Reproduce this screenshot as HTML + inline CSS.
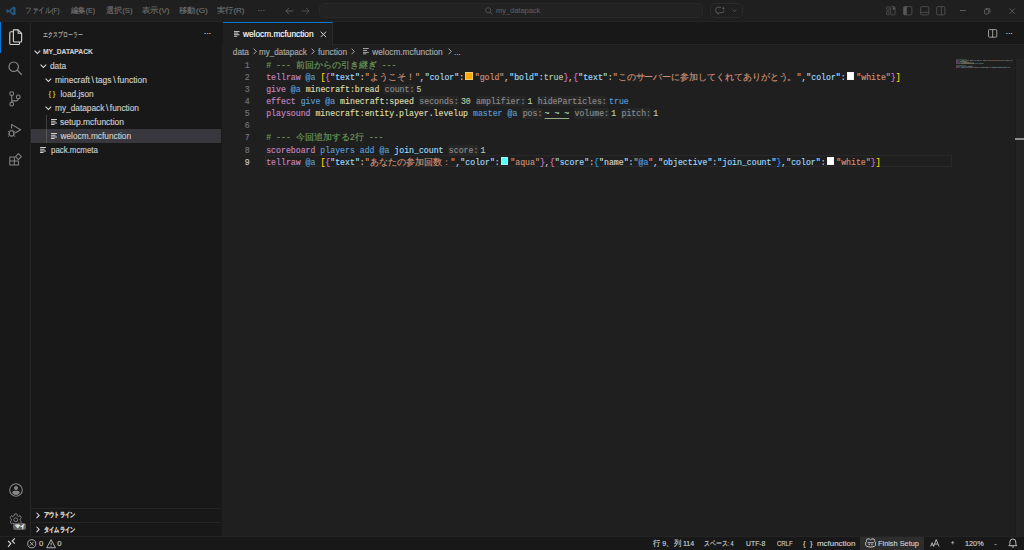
<!DOCTYPE html>
<html><head><meta charset="utf-8">
<style>
*{box-sizing:border-box;margin:0;padding:0}
html,body{width:1024px;height:550px;overflow:hidden;background:#181818}
body{position:relative;font-family:"Liberation Sans",sans-serif;color:#cccccc;-webkit-text-stroke:0.15px currentColor}
.abs{position:absolute}
.t{position:absolute;white-space:pre;line-height:1}
svg{position:absolute;overflow:visible}
/* title bar */
#title{left:0;top:0;width:1024px;height:22.4px;background:#1f1f1f;border-bottom:1px solid #242424}
.menu{font-size:7.7px;color:#6f6f6f;top:7.3px}
/* activity */
#act{left:0;top:22.4px;width:31px;height:513.5px;background:#181818;border-right:1px solid #262626}
/* sidebar */
#side{left:30.72px;top:22.4px;width:192.4px;height:513.5px;background:#181818;border-right:1px solid #262626}
.row{font-size:8.3px;color:#cccccc}
/* editor */
#ed{left:222px;top:22.4px;width:802px;height:513.5px;background:#1f1f1f}
#tabs{left:222px;top:22.4px;width:802px;height:22.4px;background:#181818;border-bottom:1px solid #262626}
#tab{left:222.6px;top:22.4px;width:110px;height:22.6px;background:#1f1f1f;border-top:1px solid #0078d4;border-right:1px solid #2b2b2b}
.code{font-family:"Liberation Mono",monospace;font-size:8.213px;line-height:12.16px;height:12.16px;white-space:pre;position:absolute;left:266.2px;color:#d4d4d4;margin-top:1.5px}
.ln{font-family:"Liberation Mono",monospace;font-size:8.213px;line-height:12.16px;position:absolute;width:20px;left:229.8px;margin-top:1.5px;text-align:right;color:#6e7681}
.hint{display:inline-block;height:10.3px;padding-top:0.8px;line-height:9.5px;vertical-align:baseline;background:#262626;color:#8b8b8b;border-radius:1.5px;margin-right:2px;padding-left:0.4px}
.cj{display:inline-flex;overflow:hidden;vertical-align:top;white-space:nowrap}.cj i{font-style:normal;flex:1 1 0;text-align:center;min-width:0}
.sw{display:inline-block;width:7.6px;height:7.9px;margin:0.15px 1.9px 0 1.1px;vertical-align:top;border:0.64px solid rgba(230,230,230,0.5)}
.k{color:#c586c0}.b{color:#569cd6}.id{color:#dcdcaa}.s{color:#ce9178}.c{color:#6a9955}.n{color:#b5cea8}.j{color:#9cdcfe}.p{color:#cccccc}
.y{color:#ffd700}.o{color:#da70d6}.bl{color:#179fff}.w{color:#d4d4d4}
/* status */
#status{left:0;top:535.9px;width:1024px;height:14.1px;background:#181818;border-top:1px solid #242424}
.st{font-size:7.7px;color:#cccccc;top:540px}
</style></head><body>

<!-- TITLE BAR -->
<div id="title" class="abs"></div>
<svg style="left:6px;top:6px" width="10" height="10" viewBox="0 0 24 24"><path d="M17.5 1 L23 3.5 V20.5 L17.5 23 L7 13.5 L2.5 17 L1 16 V8 L2.5 7 L7 10.5 Z M17.5 6.5 L11 12 L17.5 17.5 Z" fill="#235a80" fill-rule="evenodd"/></svg>
<div class="t menu" style="left:25.43px;transform:scaleX(0.828);transform-origin:0 0">ファイル(F)</div>
<div class="t menu" style="left:70.62px;transform:scaleX(0.919);transform-origin:0 0">編集(E)</div>
<div class="t menu" style="left:106.21px">選択(S)</div>
<div class="t menu" style="left:142.41px;transform:scaleX(1.050);transform-origin:0 0">表示(V)</div>
<div class="t menu" style="left:178.91px;transform:scaleX(1.060);transform-origin:0 0">移動(G)</div>
<div class="t menu" style="left:216.97px;transform:scaleX(1.030);transform-origin:0 0">実行(R)</div>
<div class="t menu" style="left:257.5px;top:7px">···</div>

<div class="abs" style="left:318.7px;top:2.9px;width:384.6px;height:15.6px;border-radius:5px;background:#222222;border:1px solid #282828"></div>
<svg style="left:484.6px;top:7px" width="7.8" height="8" viewBox="0 0 16 16"><circle cx="6.5" cy="6.5" r="5.2" fill="none" stroke="#5c5c5c" stroke-width="1.6"/><path d="M10.3 10.3 L15 15" stroke="#5c5c5c" stroke-width="1.8"/></svg>
<div class="t menu" style="left:496.02px;color:#5a5a5a;transform:scaleX(0.967);transform-origin:0 0">my_datapack</div>
<svg style="left:284.5px;top:7px" width="9" height="8" viewBox="0 0 16 14"><path d="M15 7 H2 M7 1.5 L1.5 7 L7 12.5" fill="none" stroke="#6a6a6a" stroke-width="1.4"/></svg>
<svg style="left:301px;top:7px" width="9" height="8" viewBox="0 0 16 14"><path d="M1 7 H14 M9 1.5 L14.5 7 L9 12.5" fill="none" stroke="#5a5a5a" stroke-width="1.4"/></svg>
<div class="abs" style="left:710.4px;top:2.9px;width:32.4px;height:15.6px;border-radius:5px;background:#1f1f1f;border:1px solid #2b2b2b"></div>
<svg style="left:715px;top:6.2px" width="10.5" height="9.2" viewBox="0 0 16 14"><path d="M9.5 2 H4 Q1.2 2 1.2 4.6 V7.6 Q1.2 10 3.6 10 H4.4 V12.6 L7.4 10 H11.2 Q13.6 10 13.6 7.6 V6.8" fill="none" stroke="#626262" stroke-width="1.3" stroke-linejoin="round"/><path d="M13 0.6 L13.7 2.6 L15.5 3.3 L13.7 4 L13 6 L12.3 4 L10.5 3.3 L12.3 2.6 Z" fill="#626262"/></svg>
<svg style="left:732.2px;top:9.1px" width="5" height="3.2" viewBox="0 0 10 6"><path d="M1 1 L5 5 L9 1" fill="none" stroke="#626262" stroke-width="1.4"/></svg>
<!-- layout icons -->
<svg style="left:886px;top:6.3px" width="10" height="9.5" viewBox="0 0 16 15"><rect x="1" y="1" width="4" height="5.5" rx="0.8" fill="none" stroke="#585858" stroke-width="1.2"/><rect x="1" y="8.5" width="4" height="5.5" rx="0.8" fill="none" stroke="#585858" stroke-width="1.2"/><rect x="7.5" y="1" width="7" height="13" rx="1" fill="none" stroke="#585858" stroke-width="1.2"/><circle cx="12.5" cy="4" r="2" fill="#585858"/></svg>
<svg style="left:903px;top:6.3px" width="9.5" height="9.5" viewBox="0 0 15 15"><rect x="1" y="1" width="13" height="13" rx="1.5" fill="none" stroke="#585858" stroke-width="1.2"/><rect x="1" y="1" width="5" height="13" fill="#585858"/></svg>
<svg style="left:919.5px;top:6.3px" width="9.5" height="9.5" viewBox="0 0 15 15"><rect x="1" y="1" width="13" height="13" rx="1.5" fill="none" stroke="#585858" stroke-width="1.2"/><path d="M1 10 H14" stroke="#585858" stroke-width="1.2"/></svg>
<svg style="left:936px;top:6.3px" width="9.5" height="9.5" viewBox="0 0 15 15"><rect x="1" y="1" width="13" height="13" rx="1.5" fill="none" stroke="#585858" stroke-width="1.2"/><path d="M8.5 1 V14" stroke="#585858" stroke-width="1.2"/></svg>
<svg style="left:959.6px;top:10px" width="5.8" height="1" viewBox="0 0 13 2"><path d="M0 1 H13" stroke="#7a7a7a" stroke-width="1.6"/></svg>
<svg style="left:983.8px;top:7.8px" width="6.4" height="6.4" viewBox="0 0 14 14"><rect x="1" y="3.5" width="9.5" height="9.5" rx="2.5" fill="none" stroke="#7a7a7a" stroke-width="1.5"/><path d="M3.5 1 H10.5 Q13 1 13 3.5 V10.5" fill="none" stroke="#7a7a7a" stroke-width="1.5"/></svg>
<svg style="left:1008.7px;top:7.7px" width="6.3" height="6.3" viewBox="0 0 14 14"><path d="M1 1 L13 13 M13 1 L1 13" stroke="#7a7a7a" stroke-width="1.4"/></svg>

<!-- ACTIVITY BAR -->
<div id="act" class="abs"></div>
<div class="abs" style="left:0;top:22.4px;width:1.3px;height:30.7px;background:#0078d4"></div>
<svg style="left:8.6px;top:28.8px" width="13.4" height="16.4" viewBox="0 0 14 17"><path d="M4.6 0.8 H9.6 L13.2 4.4 V12.6 Q13.2 13.6 12.2 13.6 H5.6 Q4.6 13.6 4.6 12.6 Z" fill="none" stroke="#d7d7d7" stroke-width="1.15" stroke-linejoin="round"/><path d="M9.6 0.8 V4.4 H13.2" fill="none" stroke="#d7d7d7" stroke-width="1.1"/><path d="M4.6 2.8 H2 Q0.8 2.8 0.8 4 V15 Q0.8 16.2 2 16.2 H9.8 Q11 16.2 11 15 V13.6" fill="none" stroke="#d7d7d7" stroke-width="1.15"/></svg>
<svg style="left:8.2px;top:60.8px" width="14.5" height="14.5" viewBox="0 0 16 16"><circle cx="6.3" cy="6.3" r="5.2" fill="none" stroke="#868686" stroke-width="1.3"/><path d="M10 10 L15.2 15.2" stroke="#868686" stroke-width="1.4"/></svg>
<svg style="left:9px;top:90.8px" width="12" height="15.8" viewBox="0 0 12 16"><circle cx="2.7" cy="2.7" r="1.9" fill="none" stroke="#868686" stroke-width="1.1"/><circle cx="2.7" cy="13.3" r="1.9" fill="none" stroke="#868686" stroke-width="1.1"/><circle cx="9.3" cy="6" r="1.9" fill="none" stroke="#868686" stroke-width="1.1"/><path d="M2.7 4.6 V11.4 M9.3 7.9 Q9.3 10 7 10 H2.7" fill="none" stroke="#868686" stroke-width="1.1"/></svg>
<svg style="left:7.3px;top:122.8px" width="14.5" height="14.5" viewBox="0 0 16 16"><path d="M5 1.5 L15 7.5 L9 11" fill="none" stroke="#868686" stroke-width="1.2"/><path d="M5 1.5 V6" stroke="#868686" stroke-width="1.2"/><ellipse cx="5" cy="11.5" rx="2.6" ry="3" fill="none" stroke="#868686" stroke-width="1.2"/><path d="M1 9 L2.5 10 M1 12 H2.4 M1 15 L2.6 13.8 M9 9 L7.5 10 M9 12 H7.6 M9 15 L7.4 13.8 M3.5 8.5 L4 7.5 M6.5 8.5 L6 7.5" stroke="#868686" stroke-width="1"/></svg>
<svg style="left:8.8px;top:153.2px" width="13" height="12.6" viewBox="0 0 16 15.5"><path d="M1 4.8 H6.6 V9.8 H1 Z M1 9.8 H6.6 V14.8 H1 Z M6.6 9.8 H11.8 V14.8 H6.6 Z" fill="none" stroke="#868686" stroke-width="1.25" stroke-linejoin="round"/><path d="M11.6 0.9 L15.2 4.5 L11.6 8.1 L8 4.5 Z" fill="none" stroke="#868686" stroke-width="1.25" stroke-linejoin="round"/></svg>
<svg style="left:8.5px;top:482.5px" width="14" height="14" viewBox="0 0 16 16"><circle cx="8" cy="8" r="7.2" fill="none" stroke="#868686" stroke-width="1.2"/><circle cx="8" cy="5.8" r="2.3" fill="#868686"/><path d="M3.6 11 Q4 8.8 6 8.8 H10 Q12 8.8 12.4 11 Q11 13.8 8 13.8 Q5 13.8 3.6 11 Z" fill="#868686"/></svg>
<svg style="left:8.5px;top:513px" width="13.5" height="12" viewBox="0 0 16 14"><path d="M6.6 1 H9.4 L9.8 3 L11.4 3.9 L13.3 3.2 L14.7 5.6 L13.2 7 L13.2 8.8 L14.7 10.2 L13.3 12.6 L11.4 11.9 L9.8 12.8 L9.4 14.8 H6.6 L6.2 12.8 L4.6 11.9 L2.7 12.6 L1.3 10.2 L2.8 8.8 V7 L1.3 5.6 L2.7 3.2 L4.6 3.9 L6.2 3 Z" fill="none" stroke="#868686" stroke-width="1.1"/><circle cx="8" cy="7.9" r="2.3" fill="none" stroke="#868686" stroke-width="1.1"/></svg>
<div class="abs" style="left:13.2px;top:522.6px;width:12.8px;height:7px;border-radius:2.5px;background:#616161"></div>
<div class="t" style="left:15px;top:523.5px;font-size:5.4px;font-weight:bold;color:#f0f0f0">マイ</div>

<!-- SIDEBAR -->
<div id="side" class="abs"></div>
<div class="t" style="left:43.49px;top:30.5px;font-size:7px;color:#bbbbbb;transform:scaleX(0.705);transform-origin:0 0">エクスプローラー</div>
<div class="t" style="left:203.8px;top:30px;font-size:8px;color:#cccccc;letter-spacing:-0.3px">···</div>
<svg style="left:33.8px;top:49.6px" width="6.8" height="4.2" viewBox="0 0 10 6"><path d="M0.8 0.8 L5 5 L9.2 0.8" fill="none" stroke="#d4d4d4" stroke-width="1.5"/></svg>
<div class="t" style="left:43.46px;top:48.4px;font-size:7.04px;font-weight:bold;color:#cccccc;transform:scaleX(0.952);transform-origin:0 0">MY_DATAPACK</div>
<svg style="left:39.8px;top:63.6px" width="6.8" height="4.2" viewBox="0 0 10 6"><path d="M0.8 0.8 L5 5 L9.2 0.8" fill="none" stroke="#d4d4d4" stroke-width="1.5"/></svg>
<div class="t row" style="left:50px;top:61.7px">data</div>
<svg style="left:45px;top:77.8px" width="6.8" height="4.2" viewBox="0 0 10 6"><path d="M0.8 0.8 L5 5 L9.2 0.8" fill="none" stroke="#d4d4d4" stroke-width="1.5"/></svg>
<div class="t row" style="left:55.00px;top:75.8px;transform:scaleX(1.022);transform-origin:0 0">minecraft<span style="margin:0 1.6px">\</span>tags<span style="margin:0 1.6px">\</span>function</div>
<div class="t" style="left:48.6px;top:90.3px;font-size:7.8px;color:#cbcb41;letter-spacing:1.6px">{}</div>
<div class="t row" style="left:60.5px;top:90px">load.json</div>
<svg style="left:45px;top:106px" width="6.8" height="4.2" viewBox="0 0 10 6"><path d="M0.8 0.8 L5 5 L9.2 0.8" fill="none" stroke="#d4d4d4" stroke-width="1.5"/></svg>
<div class="t row" style="left:55px;top:104px">my_datapack<span style="margin:0 1.6px">\</span>function</div>
<div class="abs" style="left:46px;top:115.2px;width:0.64px;height:28.2px;background:#404040"></div>
<svg style="left:51px;top:119.2px" width="6" height="6.4" viewBox="0 0 6 6.5"><path d="M0 0.6 H6 M0 2.3 H4.6 M0 4.0 H6 M0 5.7 H3.6" stroke="#cccccc" stroke-width="1.05"/></svg>
<div class="t row" style="left:59.99px;top:118.2px;transform:scaleX(1.020);transform-origin:0 0">setup.mcfunction</div>
<div class="abs" style="left:30.72px;top:129.28px;width:190.6px;height:14.08px;background:#37373d"></div>
<div class="abs" style="left:46px;top:129.28px;width:0.64px;height:14.08px;background:#585858"></div>
<svg style="left:51px;top:133.3px" width="6" height="6.4" viewBox="0 0 6 6.5"><path d="M0 0.6 H6 M0 2.3 H4.6 M0 4.0 H6 M0 5.7 H3.6" stroke="#cccccc" stroke-width="1.05"/></svg>
<div class="t row" style="left:60.5px;top:132.3px">welocm.mcfunction</div>
<svg style="left:40px;top:147.4px" width="6" height="6.4" viewBox="0 0 6 6.5"><path d="M0 0.6 H6 M0 2.3 H4.6 M0 4.0 H6 M0 5.7 H3.6" stroke="#cccccc" stroke-width="1.05"/></svg>
<div class="t row" style="left:50.50px;top:146.4px;transform:scaleX(0.950);transform-origin:0 0">pack.mcmeta</div>
<!-- bottom panels -->
<div class="abs" style="left:30.72px;top:507.8px;width:190.6px;height:0.8px;background:#242424"></div>
<div class="abs" style="left:30.72px;top:522.2px;width:190.6px;height:0.8px;background:#242424"></div>
<svg style="left:36px;top:511.6px" width="3.8" height="6.8" viewBox="0 0 6 10"><path d="M0.8 0.8 L5 5 L0.8 9.2" fill="none" stroke="#e0e0e0" stroke-width="1.6"/></svg>
<div class="t" style="left:44.00px;top:511.4px;font-size:7px;font-weight:bold;color:#cccccc;transform:scaleX(0.743);transform-origin:0 0">アウトライン</div>
<svg style="left:36px;top:525.7px" width="3.8" height="6.8" viewBox="0 0 6 10"><path d="M0.8 0.8 L5 5 L0.8 9.2" fill="none" stroke="#e0e0e0" stroke-width="1.6"/></svg>
<div class="t" style="left:44.00px;top:525.5px;font-size:7px;font-weight:bold;color:#cccccc;transform:scaleX(0.743);transform-origin:0 0">タイムライン</div>

<!-- EDITOR -->
<div id="ed" class="abs"></div>
<div id="tabs" class="abs"></div>
<div id="tab" class="abs"></div>
<svg style="left:233.5px;top:31px" width="5.5" height="6" viewBox="0 0 6 6.5"><path d="M0 0.6 H6 M0 2.3 H4.6 M0 4.0 H6 M0 5.7 H3.6" stroke="#cccccc" stroke-width="1.05"/></svg>
<div class="t" style="left:243px;top:30.1px;font-size:8.3px;color:#ffffff">welocm.mcfunction</div>
<svg style="left:320px;top:30.5px" width="6.8" height="6.8" viewBox="0 0 10 10"><path d="M1 1 L9 9 M9 1 L1 9" stroke="#d8d8d8" stroke-width="1.45"/></svg>
<svg style="left:988px;top:29.3px" width="9.3" height="8.8" viewBox="0 0 14 13"><rect x="0.8" y="0.8" width="12.4" height="11.4" rx="1.3" fill="none" stroke="#cccccc" stroke-width="1.1"/><path d="M7 0.8 V12.2" stroke="#cccccc" stroke-width="1.1"/></svg>
<div class="t" style="left:1005.6px;top:30px;font-size:8px;color:#cccccc;letter-spacing:-0.3px">···</div>
<div class="t" style="left:232.8px;top:48px;font-size:8.3px;color:#a9a9a9">data</div>
<svg style="left:253.4px;top:48.4px" width="4" height="6.8" viewBox="0 0 6 10"><path d="M0.8 0.8 L5 5 L0.8 9.2" fill="none" stroke="#b0b0b0" stroke-width="1.45"/></svg>
<div class="t" style="left:259.46px;top:48px;font-size:8.3px;color:#a9a9a9;transform:scaleX(0.969);transform-origin:0 0">my_datapack</div>
<svg style="left:311.1px;top:48.4px" width="4" height="6.8" viewBox="0 0 6 10"><path d="M0.8 0.8 L5 5 L0.8 9.2" fill="none" stroke="#b0b0b0" stroke-width="1.45"/></svg>
<div class="t" style="left:318px;top:48px;font-size:8.3px;color:#a9a9a9">function</div>
<svg style="left:350.8px;top:48.4px" width="4" height="6.8" viewBox="0 0 6 10"><path d="M0.8 0.8 L5 5 L0.8 9.2" fill="none" stroke="#b0b0b0" stroke-width="1.45"/></svg>
<svg style="left:362.8px;top:48.2px" width="5.8" height="6.4" viewBox="0 0 6 6.5"><path d="M0 0.5 H6 M0 2.5 H4.2 M0 4.5 H6 M0 6 H3.5" stroke="#a9a9a9" stroke-width="1"/></svg>
<div class="t" style="left:372.2px;top:48px;font-size:8.3px;color:#a9a9a9">welocm.mcfunction</div>
<svg style="left:448.1px;top:48.4px" width="4" height="6.8" viewBox="0 0 6 10"><path d="M0.8 0.8 L5 5 L0.8 9.2" fill="none" stroke="#b0b0b0" stroke-width="1.45"/></svg>
<div class="t" style="left:454px;top:48px;font-size:8.3px;color:#a9a9a9">...</div>
<div class="abs" style="left:264.7px;top:155.28px;width:687px;height:12.16px;border:1px solid #282828"></div>
<div class="ln" style="top:58.00px;color:#6e7681">1</div>
<div class="code" style="top:58.00px"><span class="c"># --- <span class="cj" style="width:81px;font-size:9px"><i>前</i><i>回</i><i>か</i><i>ら</i><i>の</i><i>引</i><i>き</i><i>継</i><i>ぎ</i></span> ---</span></div>
<div class="ln" style="top:70.16px;color:#6e7681">2</div>
<div class="code" style="top:70.16px"><span class="k">tellraw</span> <span class="b">@a</span> <span class="y">[</span><span class="o">{</span><span class="j">"text"</span><span class="p">:</span><span class="s">"<span class="cj" style="width:45.2px;font-size:9.04px"><i>よ</i><i>う</i><i>こ</i><i>そ</i><i>！</i></span>"</span><span class="p">,</span><span class="j">"color"</span><span class="p">:</span><span class="sw" style="background:#ffaa00"></span><span class="s">"gold"</span><span class="p">,</span><span class="j">"bold"</span><span class="p">:</span><span class="n">true</span><span class="o">}</span><span class="p">,</span><span class="o">{</span><span class="j">"text"</span><span class="p">:</span><span class="s">"<span class="cj" style="width:178.8px;font-size:8.94px"><i>こ</i><i>の</i><i>サ</i><i>ー</i><i>バ</i><i>ー</i><i>に</i><i>参</i><i>加</i><i>し</i><i>て</i><i>く</i><i>れ</i><i>て</i><i>あ</i><i>り</i><i>が</i><i>と</i><i>う</i><i>。</i></span>"</span><span class="p">,</span><span class="j">"color"</span><span class="p">:</span><span class="sw" style="background:#ffffff"></span><span class="s">"white"</span><span class="o">}</span><span class="y">]</span></div>
<div class="ln" style="top:82.32px;color:#6e7681">3</div>
<div class="code" style="top:82.32px"><span class="k">give</span> <span class="b">@a</span> <span class="id">minecraft:bread</span> <span class="hint" style="width:30.17px">count:</span><span class="n">5</span></div>
<div class="ln" style="top:94.48px;color:#6e7681">4</div>
<div class="code" style="top:94.48px"><span class="k">effect</span> <span class="b">give</span> <span class="b">@a</span> <span class="id">minecraft:speed</span> <span class="hint" style="width:40.02px">seconds:</span><span class="n">30</span> <span class="hint" style="width:49.88px">amplifier:</span><span class="n">1</span> <span class="hint" style="width:69.59px">hideParticles:</span><span class="b">true</span></div>
<div class="ln" style="top:106.64px;color:#6e7681">5</div>
<div class="code" style="top:106.64px"><span class="k">playsound</span> <span class="id">minecraft:entity.player.levelup</span> <span class="b">master</span> <span class="b">@a</span> <span class="hint" style="width:20.31px">pos:</span><span class="n" style="text-decoration:underline;text-decoration-color:#9bb08a;text-underline-offset:2px">~ ~ ~</span> <span class="hint" style="width:35.10px">volume:</span><span class="n">1</span> <span class="hint" style="width:30.17px">pitch:</span><span class="n">1</span></div>
<div class="ln" style="top:118.80px;color:#6e7681">6</div>
<div class="ln" style="top:130.96px;color:#6e7681">7</div>
<div class="code" style="top:130.96px"><span class="c"># --- <span class="cj" style="width:68px;font-size:8.5px"><i>今</i><i>回</i><i>追</i><i>加</i><i>す</i><i>る</i><i style="flex-grow:0.55">2</i><i>行</i></span> ---</span></div>
<div class="ln" style="top:143.12px;color:#6e7681">8</div>
<div class="code" style="top:143.12px"><span class="k">scoreboard</span> <span class="b">players</span> <span class="b">add</span> <span class="b">@a</span> <span class="j">join_count</span> <span class="hint" style="width:30.17px">score:</span><span class="n">1</span></div>
<div class="ln" style="top:155.28px;color:#cccccc">9</div>
<div class="code" style="top:155.28px"><span class="k">tellraw</span> <span class="b">@a</span> <span class="y">[</span><span class="o">{</span><span class="j">"text"</span><span class="p">:</span><span class="s">"<span class="cj" style="width:80.8px;font-size:8.98px"><i>あ</i><i>な</i><i>た</i><i>の</i><i>参</i><i>加</i><i>回</i><i>数</i><i>：</i></span>"</span><span class="p">,</span><span class="j">"color"</span><span class="p">:</span><span class="sw" style="background:#55ffff"></span><span class="s">"aqua"</span><span class="o">}</span><span class="p">,</span><span class="o">{</span><span class="j">"score"</span><span class="p">:</span><span class="bl">{</span><span class="w">"name"</span><span class="p">:</span><span class="s">"</span><span class="b">@a</span><span class="s">"</span><span class="p">,</span><span class="j">"objective"</span><span class="p">:</span><span class="j">"join_count"</span><span class="bl">}</span><span class="p">,</span><span class="j">"color"</span><span class="p">:</span><span class="sw" style="background:#ffffff"></span><span class="s">"white"</span><span class="o">}</span><span class="y">]</span></div>
<div class="abs" style="left:1014.6px;top:58.6px;width:9.4px;height:477.3px;background:#232323;border-left:1px solid #1c1c1c"></div>
<svg style="left:0;top:0" width="1024" height="550"><g stroke-width="0.75" opacity="0.5">
<path d="M956.00 59.60 H966.80" stroke="#6a9955"/>
<path d="M956.00 60.58 H959.15" stroke="#c586c0"/>
<path d="M959.60 60.58 H960.50" stroke="#569cd6"/>
<path d="M960.95 60.58 H961.40" stroke="#ffd700"/>
<path d="M961.85 60.58 H964.55" stroke="#9cdcfe"/>
<path d="M965.00 60.58 H969.50" stroke="#ce9178"/>
<path d="M969.95 60.58 H973.10" stroke="#9cdcfe"/>
<path d="M973.55 60.58 H976.25" stroke="#ce9178"/>
<path d="M976.70 60.58 H979.40" stroke="#9cdcfe"/>
<path d="M979.85 60.58 H981.65" stroke="#b5cea8"/>
<path d="M983.00 60.58 H986.15" stroke="#9cdcfe"/>
<path d="M986.60 60.58 H1005.50" stroke="#ce9178"/>
<path d="M1005.95 60.58 H1009.10" stroke="#9cdcfe"/>
<path d="M1009.55 60.58 H1012.70" stroke="#ce9178"/>
<path d="M956.00 61.56 H957.80" stroke="#c586c0"/>
<path d="M958.25 61.56 H959.15" stroke="#569cd6"/>
<path d="M959.60 61.56 H966.35" stroke="#dcdcaa"/>
<path d="M966.80 61.56 H967.25" stroke="#b5cea8"/>
<path d="M956.00 62.54 H958.70" stroke="#c586c0"/>
<path d="M959.15 62.54 H962.30" stroke="#569cd6"/>
<path d="M962.75 62.54 H969.50" stroke="#dcdcaa"/>
<path d="M969.95 62.54 H970.85" stroke="#b5cea8"/>
<path d="M971.30 62.54 H971.75" stroke="#b5cea8"/>
<path d="M972.20 62.54 H974.00" stroke="#569cd6"/>
<path d="M956.00 63.52 H960.05" stroke="#c586c0"/>
<path d="M960.50 63.52 H974.45" stroke="#dcdcaa"/>
<path d="M974.90 63.52 H978.95" stroke="#569cd6"/>
<path d="M979.40 63.52 H981.65" stroke="#b5cea8"/>
<path d="M982.10 63.52 H983.45" stroke="#b5cea8"/>
<path d="M956.00 65.48 H965.90" stroke="#6a9955"/>
<path d="M956.00 66.46 H960.50" stroke="#c586c0"/>
<path d="M960.95 66.46 H967.25" stroke="#569cd6"/>
<path d="M967.70 66.46 H972.20" stroke="#9cdcfe"/>
<path d="M972.65 66.46 H973.10" stroke="#b5cea8"/>
<path d="M956.00 67.44 H959.15" stroke="#c586c0"/>
<path d="M959.60 67.44 H960.50" stroke="#569cd6"/>
<path d="M960.95 67.44 H961.40" stroke="#ffd700"/>
<path d="M961.85 67.44 H964.55" stroke="#9cdcfe"/>
<path d="M965.00 67.44 H974.00" stroke="#ce9178"/>
<path d="M974.45 67.44 H977.60" stroke="#9cdcfe"/>
<path d="M978.05 67.44 H980.75" stroke="#ce9178"/>
<path d="M981.20 67.44 H984.80" stroke="#9cdcfe"/>
<path d="M985.25 67.44 H988.40" stroke="#9cdcfe"/>
<path d="M988.85 67.44 H991.10" stroke="#ce9178"/>
<path d="M991.55 67.44 H997.40" stroke="#9cdcfe"/>
<path d="M997.85 67.44 H1002.80" stroke="#9cdcfe"/>
<path d="M1003.25 67.44 H1006.85" stroke="#9cdcfe"/>
<path d="M1007.30 67.44 H1010.45" stroke="#ce9178"/>
</g></svg>
<div class="abs" style="left:1015px;top:138.3px;width:9px;height:1.6px;background:#8c8c8c"></div>
<!-- STATUS -->
<div id="status" class="abs"></div>
<svg style="left:0;top:534px" width="24" height="16" viewBox="0 0 24 16"><path d="M8.1 7 L10.8 9.6 L8.1 12.8" fill="none" stroke="#d0d0d0" stroke-width="1.2"/><path d="M14.8 4.4 L12.2 7 L14.8 9.6" fill="none" stroke="#d0d0d0" stroke-width="1.2"/></svg>
<svg style="left:27.3px;top:538.8px" width="9.5" height="9.5" viewBox="0 0 16 16"><circle cx="8" cy="8" r="6.8" fill="none" stroke="#cccccc" stroke-width="1.3"/><path d="M5 5 L11 11 M11 5 L5 11" stroke="#cccccc" stroke-width="1.3"/></svg>
<div class="t st" style="left:38.9px">0</div>
<svg style="left:45.7px;top:538.6px" width="10.2" height="9.4" viewBox="0 0 16 15"><path d="M8 1 L15 14 H1 Z" fill="none" stroke="#cccccc" stroke-width="1.3" stroke-linejoin="round"/><path d="M8 5.5 V10 M8 11.5 V12.8" stroke="#cccccc" stroke-width="1.3"/></svg>
<div class="t st" style="left:57.3px">0</div>
<div class="t st" style="left:653.19px;transform:scaleX(0.918);transform-origin:0 0">行 9、列 114</div>
<div class="t st" style="left:703.75px;transform:scaleX(0.732);transform-origin:0 0">スペース: 4</div>
<div class="t st" style="left:746.00px;transform:scaleX(0.891);transform-origin:0 0">UTF-8</div>
<div class="t st" style="left:776.89px;transform:scaleX(0.776);transform-origin:0 0">CRLF</div>
<div class="t st" style="left:803px;letter-spacing:1.2px">{ }</div>
<div class="t st" style="left:817.41px;transform:scaleX(1.032);transform-origin:0 0">mcfunction</div>
<div class="abs" style="left:860.1px;top:536.8px;width:63.8px;height:13.2px;background:#2d2d2d"></div>
<svg style="left:864.8px;top:538px" width="11.2" height="9.6" viewBox="0 0 16 14"><path d="M4.5 1.2 Q2 1.2 2 3.6 V5.2 Q0.8 6 0.8 7.6 V10 Q0.8 11 2 11.8 Q4.5 13.2 8 13.2 Q11.5 13.2 14 11.8 Q15.2 11 15.2 10 V7.6 Q15.2 6 14 5.2 V3.6 Q14 1.2 11.5 1.2 Q9.2 1.2 8 2.8 Q6.8 1.2 4.5 1.2 Z" fill="none" stroke="#d0d0d0" stroke-width="1.4"/><path d="M3.5 6.8 H12.5" stroke="#d0d0d0" stroke-width="1.2"/><rect x="5.2" y="8.2" width="1.6" height="2.4" fill="#d0d0d0"/><rect x="9.2" y="8.2" width="1.6" height="2.4" fill="#d0d0d0"/></svg>
<div class="t st" style="left:878.00px;transform:scaleX(0.958);transform-origin:0 0">Finish Setup</div>
<svg style="left:929.6px;top:539.3px" width="9.8" height="7.8" viewBox="0 0 15 12"><path d="M0.8 11.5 L3.3 5.5 L5.8 11.5 M1.7 9.3 H4.9" fill="none" stroke="#cccccc" stroke-width="1.2"/><path d="M5.5 11.5 L9.5 0.8 L13.8 11.5 M7.2 7.8 H12" fill="none" stroke="#cccccc" stroke-width="1.3"/></svg>
<svg style="left:950.8px;top:541.2px" width="3.4" height="3.4" viewBox="0 0 6 6"><path d="M3 0 V6 M0 3 H6" stroke="#cccccc" stroke-width="1.1"/></svg>
<div class="t st" style="left:965.03px;transform:scaleX(0.947);transform-origin:0 0">120%</div>
<div class="t st" style="left:994.2px">-</div>
<svg style="left:1008.2px;top:538px" width="9.7" height="9.8" viewBox="0 0 14 14"><path d="M1.3 11 H12.7 Q11.3 9.6 11.3 8 V5.8 Q11.3 1.3 7 1.3 Q2.7 1.3 2.7 5.8 V8 Q2.7 9.6 1.3 11 Z" fill="none" stroke="#d0d0d0" stroke-width="1.3" stroke-linejoin="round"/><path d="M5.3 12.6 Q7 13.8 8.7 12.6" fill="none" stroke="#d0d0d0" stroke-width="1.2"/></svg>
</body></html>
